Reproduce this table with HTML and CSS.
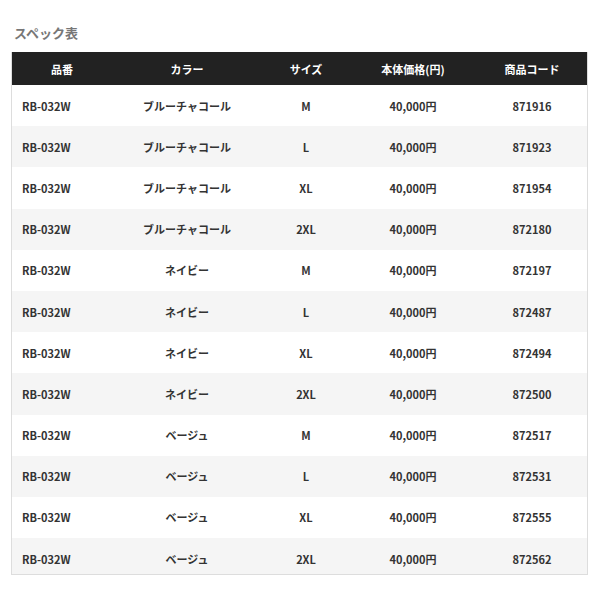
FILE: index.html
```html
<!DOCTYPE html>
<html lang="ja">
<head>
<meta charset="utf-8">
<link rel="stylesheet" href="styles.css">
</head>
<body>
<div class="page">
  <h2 class="title">スペック表</h2>
  <div class="table-wrap">
  <table class="spec">
    <colgroup>
      <col class="c-no"><col class="c-color"><col class="c-size"><col class="c-price"><col class="c-code">
    </colgroup>
    <thead>
      <tr><th>品番</th><th>カラー</th><th>サイズ</th><th>本体価格(円)</th><th>商品コード</th></tr>
    </thead>
    <tbody>
      <tr><td>RB-032W</td><td>ブルーチャコール</td><td>M</td><td>40,000円</td><td>871916</td></tr>
      <tr><td>RB-032W</td><td>ブルーチャコール</td><td>L</td><td>40,000円</td><td>871923</td></tr>
      <tr><td>RB-032W</td><td>ブルーチャコール</td><td>XL</td><td>40,000円</td><td>871954</td></tr>
      <tr><td>RB-032W</td><td>ブルーチャコール</td><td>2XL</td><td>40,000円</td><td>872180</td></tr>
      <tr><td>RB-032W</td><td>ネイビー</td><td>M</td><td>40,000円</td><td>872197</td></tr>
      <tr><td>RB-032W</td><td>ネイビー</td><td>L</td><td>40,000円</td><td>872487</td></tr>
      <tr><td>RB-032W</td><td>ネイビー</td><td>XL</td><td>40,000円</td><td>872494</td></tr>
      <tr><td>RB-032W</td><td>ネイビー</td><td>2XL</td><td>40,000円</td><td>872500</td></tr>
      <tr><td>RB-032W</td><td>ベージュ</td><td>M</td><td>40,000円</td><td>872517</td></tr>
      <tr><td>RB-032W</td><td>ベージュ</td><td>L</td><td>40,000円</td><td>872531</td></tr>
      <tr><td>RB-032W</td><td>ベージュ</td><td>XL</td><td>40,000円</td><td>872555</td></tr>
      <tr><td>RB-032W</td><td>ベージュ</td><td>2XL</td><td>40,000円</td><td>872562</td></tr>
    </tbody>
  </table>
  </div>
</div>
</body>
</html>
```
FILE: styles.css
```css
html, body {
  margin: 0;
  padding: 0;
  background: #fff;
}
body {
  font-family: "Noto Sans CJK JP", "Noto Sans", sans-serif;
  color: #333;
}
.page {
  padding: 24px 12px 0 11px;
}
.title {
  margin: 0 0 10px 3px;
  font-size: 13px;
  font-weight: bold;
  color: #777;
  line-height: 18px;
}
.table-wrap {
  width: 577px;
  height: 523px;
  overflow: hidden;
  border: 1px solid #ddd;
  border-top: none;
  box-sizing: border-box;
}
.spec {
  width: 576px;
  border-collapse: collapse;
  table-layout: fixed;
  font-size: 11px;
  font-weight: bold;
  white-space: nowrap;
}
.c-no { width: 100px; }
.c-color { width: 150px; }
.c-size { width: 88px; }
.c-price { width: 126px; }
.c-code { width: 112px; }
.spec th {
  background: #222;
  color: #fff;
  height: 33px;
  padding: 0;
  text-align: center;
  font-weight: bold;
}
.spec td {
  height: 41.2px;
  padding: 0;
  text-align: center;
  color: #333;
}
.spec td:first-child {
  text-align: left;
  padding-left: 10px;
}
.spec tbody tr:nth-child(even) td {
  background: #f5f5f5;
}
```
